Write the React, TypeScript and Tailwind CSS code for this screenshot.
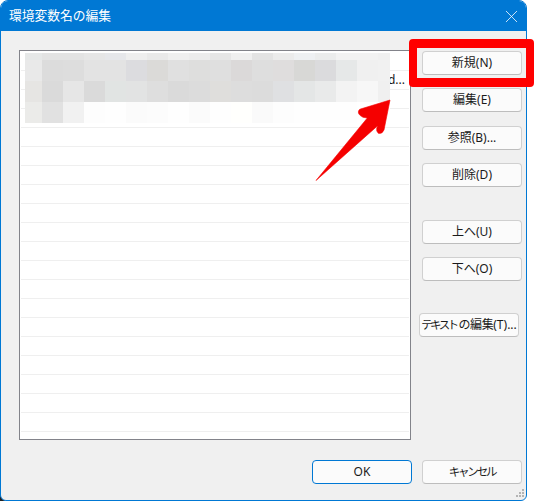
import type { ReactNode } from "react";
import { X } from "lucide-react";

const mosaic = [
  ["#e6e8e8", "#e3e3e3", "#e3e3e3", "#e6e6e6", "#e6e7ea", "#eeeeee", "#e9e9e9", "#efefef", "#ececec", "#e6e6e6", "#efefef", "#e3e3e3", "#ebebeb", "#eef0f2", "#ebecec", "#f2f2f2", "#f2f2f2", "#f0f0f0"],
  ["#e9e9e9", "#dcdcdc", "#dddddd", "#e3e3e3", "#e3e3e3", "#dcdcdf", "#dbdad8", "#e0e0e0", "#dededd", "#dfdfdf", "#dbd9d9", "#dedede", "#dfdddd", "#d8d8d6", "#dbdbdd", "#e6e8e8", "#f0f0f0", "#f1f1f1"],
  ["#e6e5e3", "#dadada", "#e6e6e6", "#dadada", "#e1e4e3", "#e2e3e3", "#dedede", "#dadada", "#dcdcdc", "#dfdedc", "#dddddd", "#dcdcdc", "#dfe0e2", "#e4e6e6", "#e9eaea", "#f3f3f3", "#f7f7f7", "#f0f0f0"],
  ["#ebebe9", "#e1e1e1", "#f1f1f1", "#fdfdfd", "#fefefe", "#fbfbfb", "#fcfcfc", "#fefefe", "#fbfbfb", "#fefefe", "#fffffd", "#fafafa", "#fdfdfd", "#fefefe", "#fefefe", "#fefefe", "#ffffff", "#ffffff"],
];

const rows = Array.from({ length: 20 }, (_, i) => i);

const Btn = ({ label, className = "" }: { label: ReactNode; className?: string }) => (
  <button
    className={`w-[100px] h-[24px] shrink-0 flex items-center justify-center rounded-[4px] border border-[#d0d0d0] border-b-[#bdbdbd] bg-[#fbfbfb] text-[12px] text-[#1a1a1a] whitespace-nowrap ${className}`}
  >
    {label}
  </button>
);

export default function App() {
  return (
    <div className="relative w-[539px] h-[501px] bg-white overflow-hidden font-['Noto_Sans','Noto_Sans_CJK_JP',sans-serif]">
      <div className="absolute left-0 top-[495px] w-[5px] h-[6px] bg-[#222222]" />
      <div className="relative w-[527px] h-[501px] flex flex-col border border-[#0078d4] rounded-t-[8px] rounded-b-[6px] overflow-hidden bg-[#f0f0f0]">
        <div className="h-[30px] shrink-0 bg-[#0078d4] flex items-center justify-between pl-[8px] pr-[4px] text-white">
          <span className="text-[12.75px]">環境変数名の編集</span>
          <X size={21} strokeWidth={0.9} />
        </div>
        <div className="flex pl-[18px] pt-[19px]">
          <div className="relative w-[392px] h-[390px] shrink-0 border border-[#82838a] bg-white pt-px overflow-hidden">
            {rows.map((i) => (
              <div
                key={i}
                className="h-[19px] mx-px flex items-center justify-end pr-[4px] border-b border-[#efefef] text-[12px] text-[#1a1a1a]"
              >
                {i === 1 ? "d..." : ""}
              </div>
            ))}
            <div className="absolute left-[5px] top-[2px] grid grid-cols-[17px_repeat(16,21px)_12px] grid-rows-[7px_21px_21px_21px]">
              {mosaic.flat().map((c, i) => (
                <div key={i} style={{ backgroundColor: c }} />
              ))}
            </div>
          </div>
          <div className="ml-[11px] pt-px flex flex-col">
            <Btn label="新規(N)" />
            <Btn label="編集(E)" className="mt-[13px]" />
            <Btn label="参照(B)..." className="mt-[14px]" />
            <Btn label="削除(D)" className="mt-[13px]" />
            <Btn label="上へ(U)" className="mt-[33px]" />
            <Btn label="下へ(O)" className="mt-[13px]" />
            <Btn
              label={
                <>
                  <span className="text-[11.5px] tracking-[-2.6px] mr-[2px]">テキスト</span>
                  <span className="tracking-[-0.4px]">の編集</span>
                  <span>(T)...</span>
                </>
              }
              className="mt-[32px] -ml-[3px]"
            />
          </div>
        </div>
        <div className="flex pl-[311px] pt-[20px] gap-[10px]">
          <Btn label="OK" className="!border-[#0078d4]" />
          <Btn label={<span className="text-[11.5px] tracking-[-2.2px]">キャンセル</span>} />
        </div>
        <svg className="absolute left-[515px] top-[487px]" width="9" height="11" viewBox="0 0 9 11" fill="#b4b4b4">
          <rect x="6" y="1" width="2" height="2" />
          <rect x="3" y="4" width="2" height="2" />
          <rect x="6" y="4" width="2" height="2" />
          <rect x="0" y="7" width="2" height="2" />
          <rect x="3" y="7" width="2" height="2" />
          <rect x="6" y="7" width="2" height="2" />
        </svg>
      </div>

      <div className="absolute left-[409px] top-[39px] w-[125px] h-[48px] border-x-[8px] border-y-[9px] border-[#ff0000] rounded-[4px]" />

      <svg className="absolute left-0 top-0 pointer-events-none" width="539" height="501" viewBox="0 0 539 501">
        <path
          d="M316 180.5 L367.3 118 L363 117.3 Q356.5 114 359 110 Q359.5 109.4 360.5 109 L390 100 L384 130 Q382 134.5 378.3 133.3 Q376 131 376.7 128.3 L377.7 125.7 Z"
          fill="#f50000"
          stroke="#f50000"
          strokeWidth="0.6"
          strokeLinejoin="round"
        />
      </svg>
    </div>
  );
}
